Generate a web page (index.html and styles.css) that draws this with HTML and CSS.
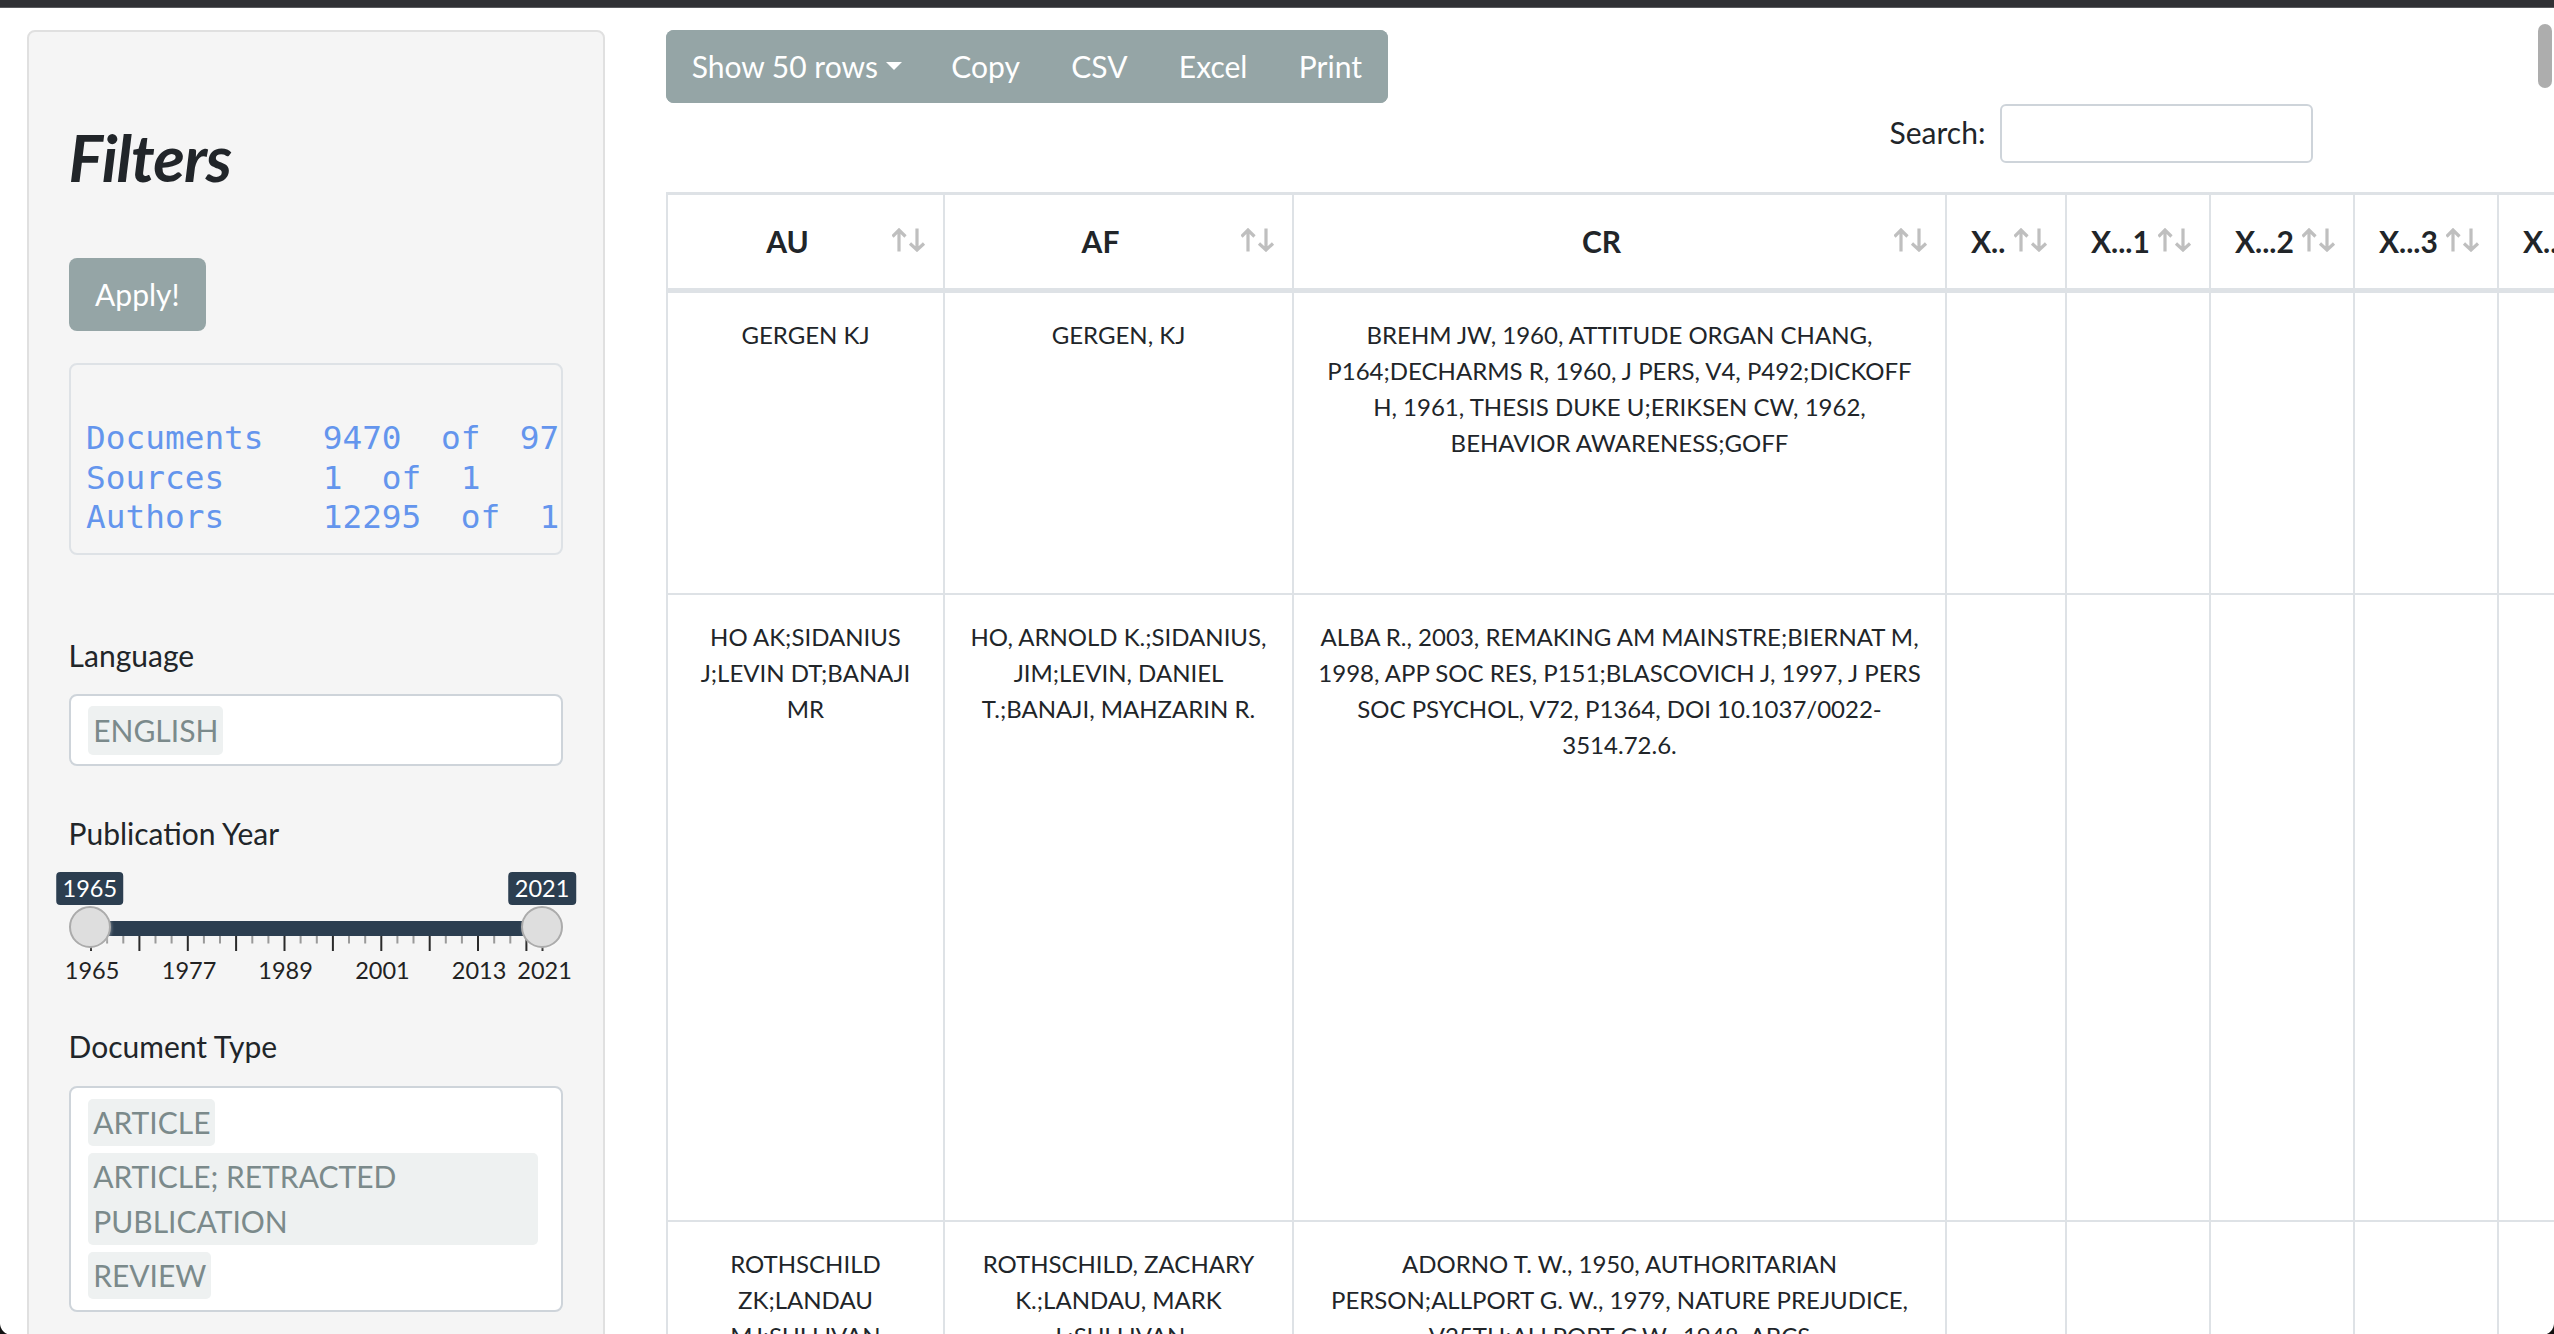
FILE: index.html
```html
<!DOCTYPE html>
<html lang="en">
<head>
<meta charset="utf-8">
<title>Filters</title>
<link rel="stylesheet" href="styles.css">
</head>
<body>
<div class="chrome-top"></div>
<div class="page">
  <aside class="sidebar">
    <h2 class="title">Filters</h2>
    <button class="btn-apply" type="button">Apply!</button>
    <pre class="stats">

Documents   9470  of  9718
Sources     1  of  1
Authors     12295  of  12600</pre>

    <div class="field field-lang">
      <label class="field-label">Language</label>
      <div class="select select-single"><span class="chip">ENGLISH</span></div>
    </div>

    <div class="field field-year">
      <label class="field-label">Publication Year</label>
      <div class="slider">
        <div class="irs-bar"></div>
        <svg class="irs-grid" width="495" height="20" viewBox="0 0 495 20">
          <g class="pol-big">
            <rect x="21" y="0" width="2" height="15"/>
            <rect x="69.4" y="0" width="2" height="15"/>
            <rect x="117.8" y="0" width="2" height="15"/>
            <rect x="166.1" y="0" width="2" height="15"/>
            <rect x="214.5" y="0" width="2" height="15"/>
            <rect x="262.9" y="0" width="2" height="15"/>
            <rect x="311.3" y="0" width="2" height="15"/>
            <rect x="359.7" y="0" width="2" height="15"/>
            <rect x="408" y="0" width="2" height="15"/>
            <rect x="456.4" y="0" width="2" height="15"/>
            <rect x="472.5" y="0" width="2" height="15"/>
          </g>
          <g class="pol-small">
            <rect x="37.1" y="0" width="2" height="7.5"/><rect x="53.3" y="0" width="2" height="7.5"/>
            <rect x="85.5" y="0" width="2" height="7.5"/><rect x="101.6" y="0" width="2" height="7.5"/>
            <rect x="133.9" y="0" width="2" height="7.5"/><rect x="150" y="0" width="2" height="7.5"/>
            <rect x="182.3" y="0" width="2" height="7.5"/><rect x="198.4" y="0" width="2" height="7.5"/>
            <rect x="230.6" y="0" width="2" height="7.5"/><rect x="246.8" y="0" width="2" height="7.5"/>
            <rect x="279" y="0" width="2" height="7.5"/><rect x="295.2" y="0" width="2" height="7.5"/>
            <rect x="327.4" y="0" width="2" height="7.5"/><rect x="343.5" y="0" width="2" height="7.5"/>
            <rect x="375.8" y="0" width="2" height="7.5"/><rect x="391.9" y="0" width="2" height="7.5"/>
            <rect x="424.2" y="0" width="2" height="7.5"/><rect x="440.3" y="0" width="2" height="7.5"/>
          </g>
        </svg>
        <span class="grid-text" style="left:23.5px">1965</span>
        <span class="grid-text" style="left:120.5px">1977</span>
        <span class="grid-text" style="left:217px">1989</span>
        <span class="grid-text" style="left:313.8px">2001</span>
        <span class="grid-text" style="left:410.5px">2013</span>
        <span class="grid-text" style="left:476px">2021</span>
        <span class="handle" style="left:21.2px"></span>
        <span class="handle" style="left:473.5px"></span>
        <span class="bubble" style="left:21.2px">1965</span>
        <span class="bubble" style="left:473.5px">2021</span>
      </div>
    </div>

    <div class="field field-type">
      <label class="field-label">Document Type</label>
      <div class="select select-multi">
        <span class="chip">ARTICLE</span>
        <span class="chip">ARTICLE; RETRACTED PUBLICATION</span>
        <span class="chip">REVIEW</span>
      </div>
    </div>
  </aside>

  <main class="main">
    <div class="dt-buttons">
      <button class="dt-btn dt-btn-drop" type="button">Show 50 rows</button>
      <button class="dt-btn" type="button">Copy</button>
      <button class="dt-btn" type="button">CSV</button>
      <button class="dt-btn" type="button">Excel</button>
      <button class="dt-btn" type="button">Print</button>
    </div>
    <div class="dt-search">
      <label class="search-label" for="q">Search:</label>
      <input class="search-input" id="q" type="text">
    </div>

    <table class="grid">
      <thead>
        <tr>
          <th class="c-au">AU<svg class="sort" viewBox="0 0 34 24" width="34" height="24"><path d="M7 23.5V2M0.5 8.5L7 2l6.5 6.5"/><path d="M25 0.5V22M18 15.5l7 6.5 7-6.5"/></svg></th>
          <th class="c-af">AF<svg class="sort" viewBox="0 0 34 24" width="34" height="24"><path d="M7 23.5V2M0.5 8.5L7 2l6.5 6.5"/><path d="M25 0.5V22M18 15.5l7 6.5 7-6.5"/></svg></th>
          <th class="c-cr">CR<svg class="sort" viewBox="0 0 34 24" width="34" height="24"><path d="M7 23.5V2M0.5 8.5L7 2l6.5 6.5"/><path d="M25 0.5V22M18 15.5l7 6.5 7-6.5"/></svg></th>
          <th class="c-x0">X..<svg class="sort" viewBox="0 0 34 24" width="34" height="24"><path d="M7 23.5V2M0.5 8.5L7 2l6.5 6.5"/><path d="M25 0.5V22M18 15.5l7 6.5 7-6.5"/></svg></th>
          <th class="c-x">X...1<svg class="sort" viewBox="0 0 34 24" width="34" height="24"><path d="M7 23.5V2M0.5 8.5L7 2l6.5 6.5"/><path d="M25 0.5V22M18 15.5l7 6.5 7-6.5"/></svg></th>
          <th class="c-x">X...2<svg class="sort" viewBox="0 0 34 24" width="34" height="24"><path d="M7 23.5V2M0.5 8.5L7 2l6.5 6.5"/><path d="M25 0.5V22M18 15.5l7 6.5 7-6.5"/></svg></th>
          <th class="c-x">X...3<svg class="sort" viewBox="0 0 34 24" width="34" height="24"><path d="M7 23.5V2M0.5 8.5L7 2l6.5 6.5"/><path d="M25 0.5V22M18 15.5l7 6.5 7-6.5"/></svg></th>
          <th class="c-x">X...4<svg class="sort" viewBox="0 0 34 24" width="34" height="24"><path d="M7 23.5V2M0.5 8.5L7 2l6.5 6.5"/><path d="M25 0.5V22M18 15.5l7 6.5 7-6.5"/></svg></th>
          <th class="c-x">X...5<svg class="sort" viewBox="0 0 34 24" width="34" height="24"><path d="M7 23.5V2M0.5 8.5L7 2l6.5 6.5"/><path d="M25 0.5V22M18 15.5l7 6.5 7-6.5"/></svg></th>
        </tr>
      </thead>
      <tbody>
        <tr class="r1">
          <td>GERGEN KJ</td>
          <td>GERGEN, KJ</td>
          <td>BREHM JW, 1960, ATTITUDE ORGAN CHANG,<br>P164;DECHARMS R, 1960, J PERS, V4, P492;DICKOFF<br>H, 1961, THESIS DUKE U;ERIKSEN CW, 1962,<br>BEHAVIOR AWARENESS;GOFF</td>
          <td></td><td></td><td></td><td></td><td></td><td></td>
        </tr>
        <tr class="r2">
          <td>HO AK;SIDANIUS<br>J;LEVIN DT;BANAJI<br>MR</td>
          <td>HO, ARNOLD K.;SIDANIUS,<br>JIM;LEVIN, DANIEL<br>T.;BANAJI, MAHZARIN R.</td>
          <td>ALBA R., 2003, REMAKING AM MAINSTRE;BIERNAT M,<br>1998, APP SOC RES, P151;BLASCOVICH J, 1997, J PERS<br>SOC PSYCHOL, V72, P1364, DOI 10.1037/0022-<br>3514.72.6.</td>
          <td></td><td></td><td></td><td></td><td></td><td></td>
        </tr>
        <tr class="r3">
          <td>ROTHSCHILD<br>ZK;LANDAU<br>MJ;SULLIVAN<br>DM;KEEFER LA</td>
          <td>ROTHSCHILD, ZACHARY<br>K.;LANDAU, MARK<br>J.;SULLIVAN<br>DANIEL</td>
          <td>ADORNO T. W., 1950, AUTHORITARIAN<br>PERSON;ALLPORT G. W., 1979, NATURE PREJUDICE,<br>V25TH;ALLPORT G.W., 1948, ABCS<br>OF SCAPEGOATING</td>
          <td></td><td></td><td></td><td></td><td></td><td></td>
        </tr>
      </tbody>
    </table>
  </main>
</div>
<div class="scroll-thumb"></div>
<div class="corner corner-bl"></div>
<div class="corner corner-br"></div>
</body>
</html>
```

FILE: styles.css
```css
* { box-sizing: border-box; }

html, body {
  margin: 0;
  height: 100%;
}

body {
  font-family: Lato, "Open Sans", sans-serif;
  font-size: 30px;
  line-height: 1.5;
  color: #212529;
  background: #ffffff;
  overflow: hidden;
}

.chrome-top {
  height: 7.5px;
  background: #303135;
  border-bottom: 1.5px solid #5a5b5f;
}

.page {
  display: flex;
  align-items: flex-start;
  padding: 22.5px 0 0 27px;
}

/* ---------- sidebar ---------- */
.sidebar {
  flex: none;
  width: 578px;
  min-height: 1400px;
  background: #f5f5f5;
  border: 2px solid #e0e0e0;
  border-radius: 8px;
  padding: 38px 39.6px 40px;
}

.title {
  margin: 47px 0 61px;
  font-family: Lato, sans-serif;
  font-style: italic;
  font-weight: 700;
  font-size: 65px;
  letter-spacing: -1px;
  line-height: 80px;
  color: #212529;
}

.btn-apply {
  display: block;
  font: inherit;
  line-height: 45px;
  padding: 14px 26.5px;
  border: 0;
  border-radius: 8px;
  background: #95a5a6;
  color: #ffffff;
}

.stats {
  margin: 32.3px 0 0;
  padding: 14px 13px 15px 15.5px;
  font-family: "DejaVu Sans Mono", "Liberation Mono", monospace;
  font-size: 32.75px;
  line-height: 39.7px;
  color: #6495ed;
  background: #f5f5f5;
  border: 2px solid #dee2e6;
  border-radius: 8px;
  overflow: hidden;
  white-space: pre;
}

.field-label {
  display: block;
  line-height: 45px;
  margin-bottom: 16.7px;
}

.field-lang { margin-top: 77.5px; }
.field-year { margin-top: 44.6px; }
.field-year .field-label { margin-bottom: 16.5px; }

.select {
  background: #ffffff;
  border: 2px solid #ced4da;
  border-radius: 8px;
}

.select-single { padding: 9.5px 17.6px; }
.select-single .chip {
  display: block;
  width: fit-content;
  padding: 2px 5px;
  line-height: 45px;
}

.select-multi { padding: 11px 17.6px 4px; }
.select-multi .chip {
  display: block;
  width: fit-content;
  margin: 0 6px 7px 0;
  padding: 1px 5px;
  line-height: 45px;
}

.chip {
  background: #eef1f1;
  color: #7b8a8b;
  border-radius: 5px;
}

/* ---------- range slider ---------- */
.slider {
  position: relative;
  height: 151.5px;
}

.irs-bar {
  position: absolute;
  left: 21px;
  right: 21px;
  top: 48.2px;
  height: 15.5px;
  background: #2c3e50;
}

.irs-grid {
  position: absolute;
  left: 0;
  top: 63.7px;
  display: block;
}

.pol-big rect { fill: #2b2b2b; }
.pol-small rect { fill: #9a9a9a; }

.grid-text {
  position: absolute;
  top: 84px;
  transform: translateX(-50%);
  font-size: 23.5px;
  line-height: 28px;
  color: #222222;
  white-space: nowrap;
}

.handle {
  position: absolute;
  top: 33.2px;
  width: 42px;
  height: 42px;
  margin-left: -21px;
  border-radius: 50%;
  background: #dedede;
  border: 2px solid #ababab;
  box-shadow: 1px 1px 3px rgba(255, 255, 255, 0.3);
}

.bubble {
  position: absolute;
  top: 0;
  transform: translateX(-50%);
  height: 33px;
  padding: 0 6.5px;
  font-size: 23.5px;
  line-height: 33px;
  color: #ffffff;
  background: #2c3e50;
  border-radius: 4px;
  white-space: nowrap;
}

/* ---------- main ---------- */
.main {
  flex: none;
  width: 1647px;
  margin-left: 61px;
}

.dt-buttons {
  display: flex;
  width: fit-content;
  border-radius: 8px;
  overflow: hidden;
  background: #95a5a6;
}

.dt-btn {
  font: inherit;
  line-height: 45px;
  padding: 14px 25.7px;
  border: 0;
  background: #95a5a6;
  color: #ffffff;
}

.dt-btn-drop { padding-right: 24px; }

.dt-btn-drop::after {
  content: "";
  display: inline-block;
  margin-left: 7.65px;
  vertical-align: 7.65px;
  border-top: 8.5px solid #ffffff;
  border-left: 8.5px solid transparent;
  border-right: 8.5px solid transparent;
}

.dt-search {
  display: flex;
  justify-content: flex-end;
  align-items: center;
  margin-top: 0.6px;
}

.search-label {
  line-height: 45px;
  margin-right: 15px;
  margin-top: -2px;
}

.search-input {
  width: 312.6px;
  height: 59px;
  border: 2px solid #ced4da;
  border-radius: 6px;
  background: #ffffff;
  font: inherit;
  padding: 0 12px;
}

/* ---------- table ---------- */
.grid {
  margin-top: 29.4px;
  width: 2119px;
  table-layout: fixed;
  border-collapse: separate;
  border-spacing: 0;
  border-top: 3.3px solid #dee2e6;
}

.grid th {
  position: relative;
  padding: 24px 60px 24px 24px;
  border-left: 2px solid #dee2e6;
  border-bottom: 5px solid #dee2e6;
  font-weight: 700;
  font-size: 30px;
  line-height: 45px;
  text-align: center;
  white-space: nowrap;
  overflow: hidden;
}

.c-au { width: 277px; }
.c-af { width: 349px; }
.c-cr { width: 653px; }
.c-x0 { width: 120px; }
.c-x  { width: 144px; }

.sort {
  position: absolute;
  right: 17.3px;
  top: 33px;
  fill: none;
  stroke: #bfbfbf;
  stroke-width: 3.2;
}

.grid td {
  padding: 24px;
  border-left: 2px solid #dee2e6;
  border-bottom: 2px solid #dee2e6;
  font-size: 24px;
  line-height: 36px;
  text-align: center;
  vertical-align: top;
  white-space: nowrap;
  color: #212529;
}

.r1 td { height: 302px; }
.r2 td { height: 627.4px; }
.r3 td { height: 600px; }

/* ---------- window chrome overlays ---------- */
.scroll-thumb {
  position: fixed;
  left: 2538px;
  top: 24px;
  width: 14px;
  height: 64px;
  border-radius: 7px;
  background: #adadad;
}

.corner {
  position: fixed;
  bottom: 0;
  width: 12px;
  height: 11px;
}

.corner-bl {
  left: 0;
  background: radial-gradient(circle 12px at 100% 0, transparent 11.5px, #111 12.5px);
}

.corner-br {
  right: 0;
  background: radial-gradient(circle 12px at 0 0, transparent 11.5px, #111 12.5px);
}
```
